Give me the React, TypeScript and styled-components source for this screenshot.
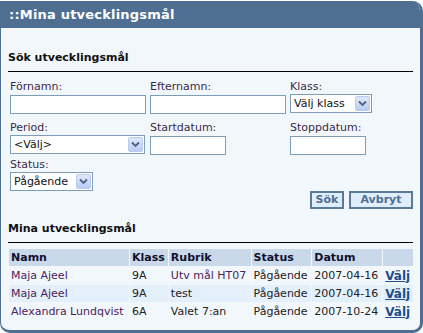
import styled, { createGlobalStyle } from 'styled-components';

const GlobalStyle = createGlobalStyle`
  html, body {
    margin: 0;
    padding: 0;
    background: #ffffff;
  }
  body {
    font-family: "DejaVu Sans", Verdana, sans-serif;
    font-size: 11px;
    color: #222;
  }
`;

const rows = [
  { namn: 'Maja Ajeel', klass: '9A', rubrik: 'Utv mål HT07', status: 'Pågående', datum: '2007-04-16' },
  { namn: 'Maja Ajeel', klass: '9A', rubrik: 'test', status: 'Pågående', datum: '2007-04-16' },
  { namn: 'Alexandra Lundqvist', klass: '6A', rubrik: 'Valet 7:an', status: 'Pågående', datum: '2007-10-24' },
];

const Panel = styled.div`
  margin-top: 1px;
  width: 423px;
  height: 332px;
  box-sizing: border-box;
  background: #f2f7fc;
  border-style: solid;
  border-color: #4e6f91;
  border-width: 0 3px 3px 1px;
  border-radius: 0 10px 10px 10px;
  overflow: hidden;
`;

const Header = styled.div`
  height: 27px;
  background: #4e6f91;
  color: #ffffff;
  font-weight: bold;
  font-size: 13px;
  letter-spacing: 0.2px;
  line-height: 27px;
  padding-left: 8px;
`;

const Section = styled.div`
  padding: 0 7px 0 7px;
`;

const SectionTitle = styled.div<{ $top: number }>`
  margin-top: ${(p) => p.$top}px;
  font-weight: bold;
  color: #111;
  line-height: 14px;
  padding-bottom: 6px;
  border-bottom: 1px solid #000;
`;

const FormGrid = styled.div`
  display: grid;
  grid-template-columns: 140px 140px 1fr;
  padding-left: 2px;
  margin-top: 8px;
`;

const Field = styled.div<{ $h?: number }>`
  display: flex;
  flex-direction: column;
  align-items: flex-start;
  height: ${(p) => p.$h ?? 37}px;
`;

const Label = styled.label`
  line-height: 14px;
  color: #3a2a48;
`;

const TextInput = styled.input<{ $w: number }>`
  width: ${(p) => p.$w}px;
  height: 19px;
  box-sizing: border-box;
  border: 1px solid #7f9db9;
  background: #fff;
  margin: 1px 0 0 0;
  padding: 0;
`;

const SelectBox = styled.div<{ $w: number }>`
  width: ${(p) => p.$w}px;
  height: 19px;
  box-sizing: border-box;
  border: 1px solid #7f9db9;
  background: #fff;
  display: flex;
  align-items: center;
  justify-content: space-between;
  padding: 0 1px 0 3px;
  font-size: 11px;
  color: #111;
`;

const Arrow = styled.span`
  width: 15px;
  height: 15px;
  box-sizing: border-box;
  border: 1px solid #b8cbef;
  border-radius: 2px;
  background: linear-gradient(#e0e9fb, #b9cdf3);
  display: flex;
  align-items: center;
  justify-content: center;
`;

const Buttons = styled.div`
  display: flex;
  justify-content: flex-end;
  gap: 5px;
  margin-top: -4px;
`;

const Button = styled.button<{ $w: number }>`
  width: ${(p) => p.$w}px;
  height: 18px;
  box-sizing: border-box;
  border: 2px solid #5a7a9a;
  background: #e0eefb;
  color: #4e6f91;
  font-family: "DejaVu Sans", Verdana, sans-serif;
  font-weight: bold;
  font-size: 11px;
  line-height: 14px;
  padding: 0;
`;

const Table = styled.table`
  margin-top: 5px;
  width: 406px;
  border-collapse: separate;
  border-spacing: 1px;
  margin-left: 0;
`;

const Th = styled.th<{ $w?: number }>`
  background: #c9d9e9;
  text-align: left;
  font-weight: bold;
  color: #101030;
  height: 17px;
  padding: 0 2px;
  white-space: nowrap;
  width: ${(p) => (p.$w ? `${p.$w}px` : 'auto')};
`;

const Tr = styled.tr<{ $alt: boolean }>`
  background: ${(p) => (p.$alt ? '#e3effb' : 'transparent')};
`;

const Td = styled.td<{ $purple?: boolean }>`
  height: 17px;
  padding: 0 2px;
  white-space: nowrap;
  color: ${(p) => (p.$purple ? '#4a1d5c' : '#222')};
`;

const Link = styled.a`
  color: #1c4e8c;
  font-weight: bold;
  font-size: 12px;
  text-decoration: underline;
`;

const Chevron = () => (
  <svg width="9" height="7" viewBox="0 0 9 7">
    <path d="M1 1.5 L4.5 5 L8 1.5" fill="none" stroke="#4d6185" strokeWidth="1.8" />
  </svg>
);

const Select = ({ w, value }: { w: number; value: string }) => (
  <SelectBox $w={w}>
    <span>{value}</span>
    <Arrow>
      <Chevron />
    </Arrow>
  </SelectBox>
);

export default function App() {
  return (
    <>
      <GlobalStyle />
      <Panel>
        <Header>::Mina utvecklingsmål</Header>
        <Section>
          <SectionTitle $top={23}>Sök utvecklingsmål</SectionTitle>
          <FormGrid>
            <Field $h={41}>
              <Label>Förnamn:</Label>
              <TextInput $w={136} />
            </Field>
            <Field $h={41}>
              <Label>Efternamn:</Label>
              <TextInput $w={136} />
            </Field>
            <Field $h={41}>
              <Label>Klass:</Label>
              <Select w={82} value="Välj klass" />
            </Field>
            <Field>
              <Label>Period:</Label>
              <Select w={135} value="<Välj>" />
            </Field>
            <Field>
              <Label>Startdatum:</Label>
              <TextInput $w={76} />
            </Field>
            <Field>
              <Label>Stoppdatum:</Label>
              <TextInput $w={76} />
            </Field>
            <Field>
              <Label>Status:</Label>
              <Select w={83} value="Pågående" />
            </Field>
          </FormGrid>
          <Buttons>
            <Button $w={34}>Sök</Button>
            <Button $w={64}>Avbryt</Button>
          </Buttons>
          <SectionTitle $top={13}>Mina utvecklingsmål</SectionTitle>
          <Table>
            <thead>
              <tr>
                <Th $w={116}>Namn</Th>
                <Th>Klass</Th>
                <Th>Rubrik</Th>
                <Th>Status</Th>
                <Th>Datum</Th>
                <Th />
              </tr>
            </thead>
            <tbody>
              {rows.map((r, i) => (
                <Tr key={i} $alt={i === 1}>
                  <Td $purple>{r.namn}</Td>
                  <Td>{r.klass}</Td>
                  <Td $purple={i === 0}>{r.rubrik}</Td>
                  <Td>{r.status}</Td>
                  <Td>{r.datum}</Td>
                  <Td>
                    <Link href="#">Välj</Link>
                  </Td>
                </Tr>
              ))}
            </tbody>
          </Table>
        </Section>
      </Panel>
    </>
  );
}
